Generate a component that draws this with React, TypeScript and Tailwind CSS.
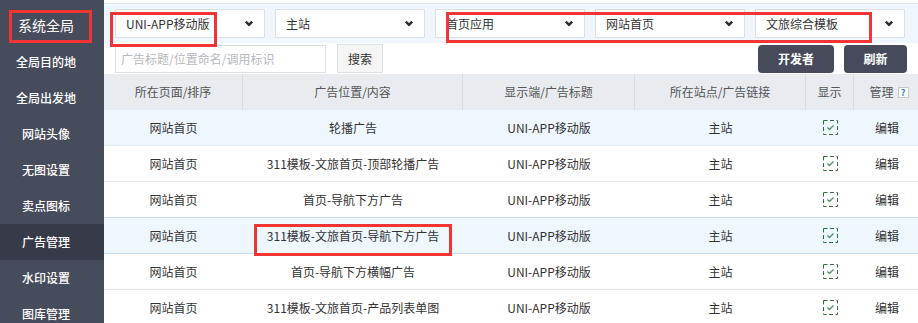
import React from "react";

const font = { fontFamily: '"Noto Sans CJK SC", "Noto Sans", sans-serif' };

const menu = ["全局目的地", "全局出发地", "网站头像", "无图设置", "卖点图标", "广告管理", "水印设置", "图库管理"];

const filters = ["UNI-APP移动版", "主站", "首页应用", "网站首页", "文旅综合模板"];

const rows = [
  { page: "网站首页", pos: "轮播广告", active: true },
  { page: "网站首页", pos: "311模板-文旅首页-顶部轮播广告" },
  { page: "网站首页", pos: "首页-导航下方广告" },
  { page: "网站首页", pos: "311模板-文旅首页-导航下方广告", active: true, marked: true },
  { page: "网站首页", pos: "首页-导航下方横幅广告" },
  { page: "网站首页", pos: "311模板-文旅首页-产品列表单图" },
];

const cols = "grid grid-cols-[139px_220px_172px_171px_48px_64px]";

function Chevron() {
  return (
    <svg width="10" height="7" viewBox="0 0 10 7" fill="none">
      <path d="M1.8 1.6 L5 4.8 L8.2 1.6" stroke="#2b2b2b" strokeWidth="2.4" />
    </svg>
  );
}

function CheckBox() {
  return (
    <svg width="15" height="15" viewBox="0 0 15 15" fill="none">
      <rect x="0.5" y="0.5" width="14" height="14" stroke="#2d6e3a" strokeDasharray="4 2.5" />
      <path d="M4.5 7.5 L6.5 9.5 L10.5 5.5" stroke="#4f9a60" strokeWidth="1.4" />
    </svg>
  );
}

function RedBox({ className }: { className: string }) {
  return <div className={`pointer-events-none absolute border-[3px] border-[#f23434] ${className}`} />;
}

export default function App() {
  return (
    <div className="relative flex h-[323px] w-[918px] overflow-hidden bg-white text-[12px] text-[#333]" style={font}>
      <aside className="w-[104px] shrink-0 bg-[#474c5c] text-white">
        <div className="flex h-[44px] items-center justify-center pt-[6px] pr-[12px] text-[14px]">系统全局</div>
        {menu.map((m) => (
          <div
            key={m}
            className={
              m === "广告管理"
                ? "flex h-[36px] items-center justify-center bg-[#363a49] pr-[12px] font-medium"
                : "flex h-[36px] items-center justify-center pr-[12px] font-medium"
            }
          >
            {m}
          </div>
        ))}
      </aside>

      <main className="min-w-0 flex-1">
        <div className="mt-[3px] flex h-[40px] items-center gap-[10px] border-t border-[#e3e8ee] bg-[#f0f6fd] px-[11px]">
          {filters.map((f) => (
            <div
              key={f}
              className="flex h-[29px] w-[150px] items-center justify-between border border-[#dcdfe3] bg-white pl-[10px] pr-[10px]"
            >
              <span>{f}</span>
              <Chevron />
            </div>
          ))}
        </div>

        <div className="flex h-[31px] items-center px-[11px]">
          <div className="flex h-[28px] w-[211px] items-center border border-[#dcdfe3] px-[5px] text-[#b5b8bd]">
            广告标题/位置命名/调用标识
          </div>
          <button className="ml-[11px] h-[29px] w-[46px] border border-[#dcdfe3] bg-[#f5f5f5] text-[#333]">搜索</button>
          <div className="flex-1" />
          <button className="h-[28px] w-[76px] rounded-[4px] bg-[#464a5b] font-bold text-white">开发者</button>
          <button className="ml-[10px] h-[28px] w-[63px] rounded-[4px] bg-[#464a5b] font-bold text-white">刷新</button>
        </div>

        <div className={`${cols} h-[36px] bg-[#e8ebf0] text-[#555]`}>
          {["所在页面/排序", "广告位置/内容", "显示端/广告标题", "所在站点/广告链接", "显示"].map((h) => (
            <div key={h} className="flex items-center justify-center border-r border-[#d9dde3]">
              {h}
            </div>
          ))}
          <div className="flex items-center justify-center gap-[4px] pl-[6px]">
            管理
            <span className="flex h-[11px] w-[11px] items-center justify-center border border-[#c4c7cc] bg-white text-[9px] font-bold leading-none text-[#2f80dd]">
              ?
            </span>
          </div>
        </div>

        {rows.map((r, i) => {
          const nextMarked = rows[i + 1]?.marked;
          return (
            <div
              key={i}
              className={`${cols} h-[36px] border-b ${
                r.marked || nextMarked ? "border-[#c3dcf1]" : "border-[#e3e6ea]"
              } ${r.active ? "bg-[#eef6fe]" : "bg-white"}`}
            >
              <div className="flex items-center justify-center">{r.page}</div>
              <div className="flex items-center justify-center">{r.pos}</div>
              <div className="flex items-center justify-center">UNI-APP移动版</div>
              <div className="flex items-center justify-center">主站</div>
              <div className="flex items-center justify-center">
                <CheckBox />
              </div>
              <div className="flex items-center justify-center pl-[2px]">编辑</div>
            </div>
          );
        })}
      </main>

      <RedBox className="left-[9px] top-[10px] h-[33px] w-[83px]" />
      <RedBox className="left-[110px] top-[12px] h-[35px] w-[107px]" />
      <RedBox className="left-[446px] top-[12px] h-[31px] w-[426px]" />
      <RedBox className="left-[254px] top-[224px] h-[32px] w-[198px]" />
    </div>
  );
}
